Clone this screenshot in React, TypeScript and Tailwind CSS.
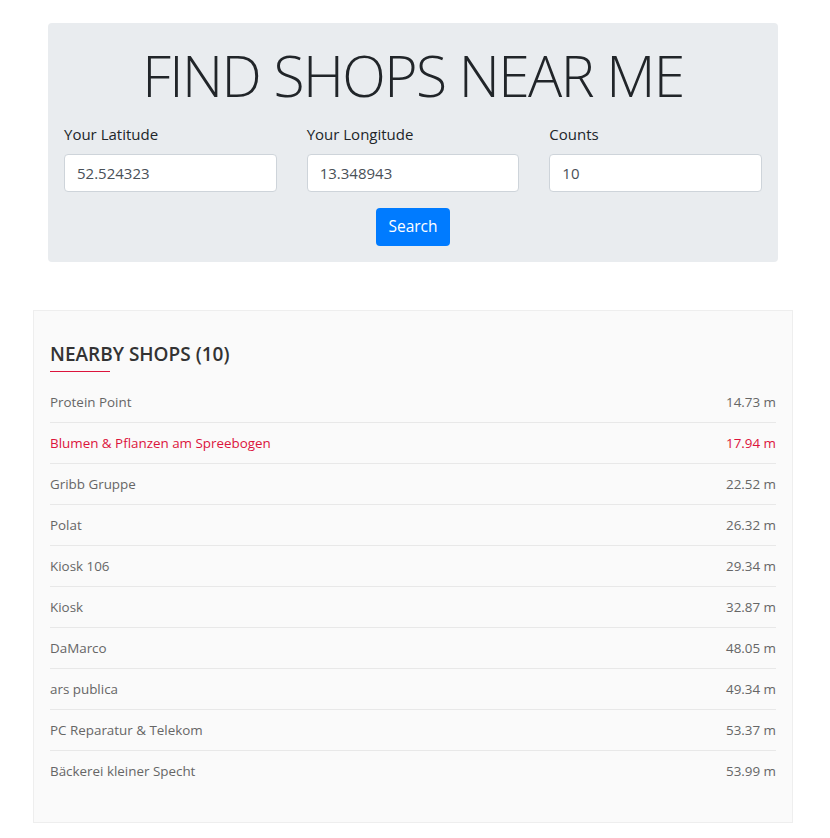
const shops = [
  { name: "Protein Point", dist: "14.73 m" },
  { name: "Blumen & Pflanzen am Spreebogen", dist: "17.94 m", active: true },
  { name: "Gribb Gruppe", dist: "22.52 m" },
  { name: "Polat", dist: "26.32 m" },
  { name: "Kiosk 106", dist: "29.34 m" },
  { name: "Kiosk", dist: "32.87 m" },
  { name: "DaMarco", dist: "48.05 m" },
  { name: "ars publica", dist: "49.34 m" },
  { name: "PC Reparatur & Telekom", dist: "53.37 m" },
  { name: "Bäckerei kleiner Specht", dist: "53.99 m" },
];

function Field({ label, value }: { label: string; value: string }) {
  return (
    <div className="flex flex-col">
      <label className="mb-2 text-[15px] leading-6 text-[#212529]">{label}</label>
      <input
        readOnly
        value={value}
        className="h-[38px] rounded border border-[#ced4da] bg-white px-3 text-[15px] text-[#495057] outline-none"
      />
    </div>
  );
}

export default function App() {
  return (
    <div className="min-h-screen bg-white font-['Open_Sans',sans-serif]">
      {/* search form */}
      <div className="ml-[48px] mt-[23px] w-[730px] rounded bg-[#e9ecef] px-4 pb-4 pt-4">
        <h1 className="text-center text-[57px] font-light leading-[72px] tracking-[-1.6px] text-[#212529]">
          FIND SHOPS NEAR ME
        </h1>
        <div className="mt-[11px] grid grid-cols-3 gap-[30px]">
          <Field label="Your Latitude" value="52.524323" />
          <Field label="Your Longitude" value="13.348943" />
          <Field label="Counts" value="10" />
        </div>
        <div className="mt-4 flex justify-center">
          <button className="h-[38px] w-[74px] rounded bg-[#007bff] text-[15.5px] text-white">
            Search
          </button>
        </div>
      </div>

      {/* results */}
      <div className="ml-[33px] mt-[48px] w-[760px] border border-[#eeeeee] bg-[#fafafa] px-4 pb-[30px] pt-[31px]">
        <h2 className="text-[19px] font-semibold leading-6 text-[#333]">NEARBY SHOPS (10)</h2>
        <div className="mt-[5px] h-px w-[60px] bg-[#dc143c]" />
        <ul className="mt-[10px]">
          {shops.map((s, i) => (
            <li
              key={s.name}
              className={`flex h-[41px] items-center justify-between text-[13.4px] ${
                i < shops.length - 1 ? "border-b border-[#e8e8e8]" : ""
              } ${s.active ? "text-[#dc143c]" : "text-[#666]"}`}
            >
              <span>{s.name}</span>
              <span>{s.dist}</span>
            </li>
          ))}
        </ul>
      </div>
    </div>
  );
}
